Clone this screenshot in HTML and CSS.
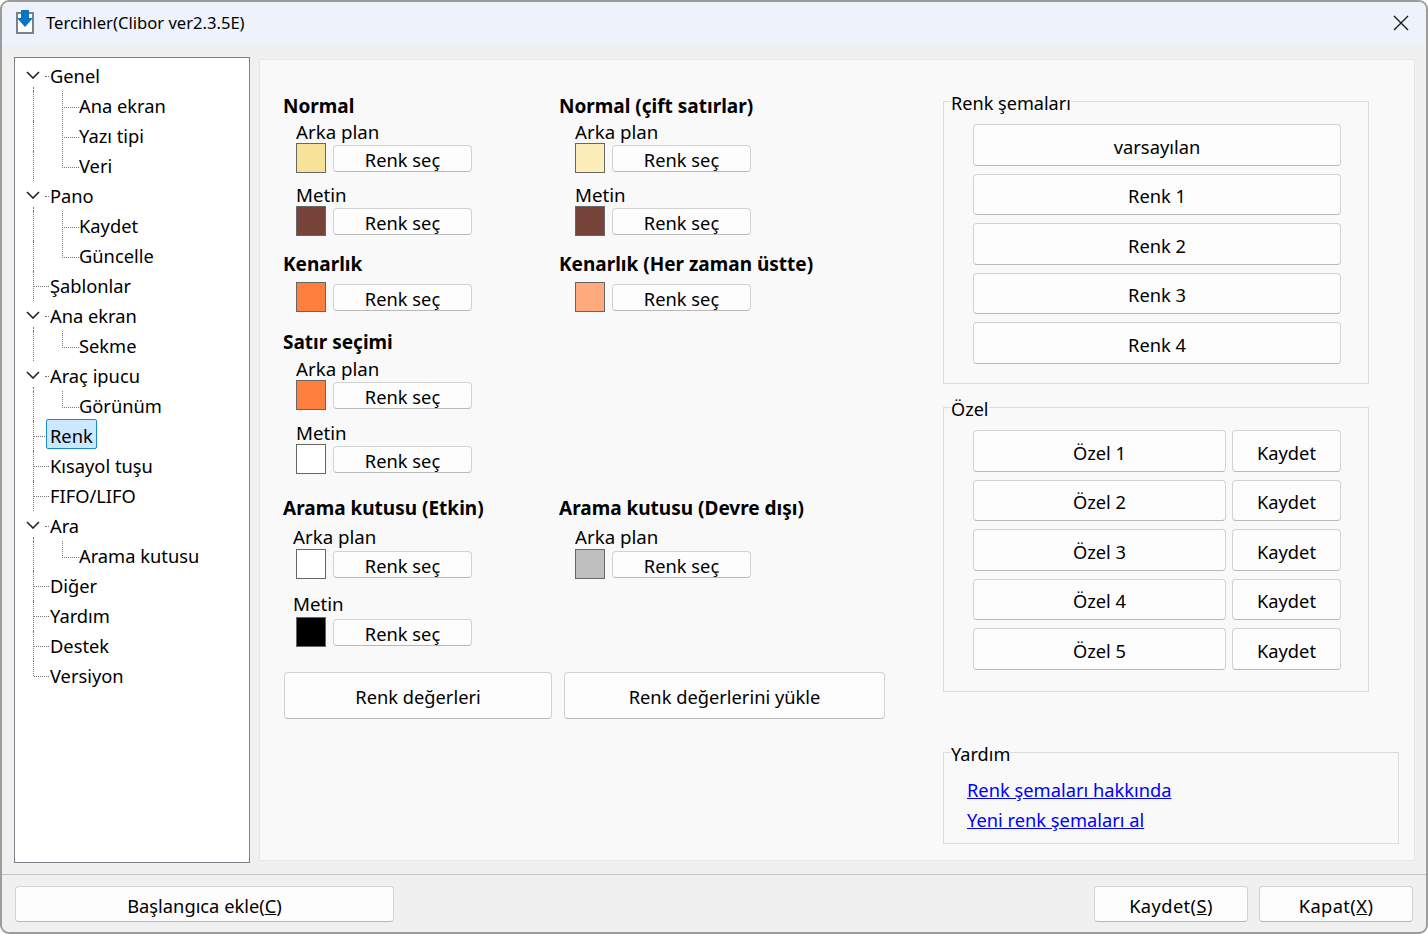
FILE: index.html
```html
<!DOCTYPE html>
<html>
<head>
    <title>Tercihler</title>
    <meta charset="utf-8">
    <link rel="stylesheet" href="styles.css">
</head>
<body>
<div class="window">
    <div class="titlebar">
        <svg class="app-icon" width="18" height="24" viewBox="0 0 18 24">
            <rect x="1" y="3" width="16" height="20" fill="#fff" stroke="#7d8288" stroke-width="2"/>
            <path d="M5 0h8v8h4l-8 9-8-9h4z" fill="#0a74c4"/>
        </svg>
        <span class="title">Tercihler(Clibor ver2.3.5E)</span>
        <svg class="close" width="16" height="16" viewBox="0 0 16 16">
            <path d="M1 1l14 14M15 1L1 15" stroke="#1a1a1a" stroke-width="1.4" fill="none"/>
        </svg>
    </div>

    <div class="main">
        <ul class="tree">
            <li class="node open"><svg class="chevron" width="14" height="8" viewBox="0 0 14 8"><path d="M1 1l6 6 6-6" fill="none" stroke="#222" stroke-width="1.6"/></svg><span>Genel</span></li>
            <li class="leaf">Ana ekran</li>
            <li class="leaf">Yazı tipi</li>
            <li class="leaf last">Veri</li>
            <li class="node open"><svg class="chevron" width="14" height="8" viewBox="0 0 14 8"><path d="M1 1l6 6 6-6" fill="none" stroke="#222" stroke-width="1.6"/></svg><span>Pano</span></li>
            <li class="leaf">Kaydet</li>
            <li class="leaf last">Güncelle</li>
            <li class="node"><span>Şablonlar</span></li>
            <li class="node open"><svg class="chevron" width="14" height="8" viewBox="0 0 14 8"><path d="M1 1l6 6 6-6" fill="none" stroke="#222" stroke-width="1.6"/></svg><span>Ana ekran</span></li>
            <li class="leaf last">Sekme</li>
            <li class="node open"><svg class="chevron" width="14" height="8" viewBox="0 0 14 8"><path d="M1 1l6 6 6-6" fill="none" stroke="#222" stroke-width="1.6"/></svg><span>Araç ipucu</span></li>
            <li class="leaf last">Görünüm</li>
            <li class="node"><span class="selected">Renk</span></li>
            <li class="node"><span>Kısayol tuşu</span></li>
            <li class="node"><span>FIFO/LIFO</span></li>
            <li class="node open"><svg class="chevron" width="14" height="8" viewBox="0 0 14 8"><path d="M1 1l6 6 6-6" fill="none" stroke="#222" stroke-width="1.6"/></svg><span>Ara</span></li>
            <li class="leaf last">Arama kutusu</li>
            <li class="node"><span>Diğer</span></li>
            <li class="node"><span>Yardım</span></li>
            <li class="node"><span>Destek</span></li>
            <li class="node end"><span>Versiyon</span></li>
        </ul>

        <div class="panel">
            <div class="colors">
                <div class="color-row">
                    <div class="group">
                        <h3>Normal</h3>
                        <div class="label">Arka plan</div>
                        <div class="field"><i class="swatch cream"></i><button>Renk seç</button></div>
                        <div class="label next">Metin</div>
                        <div class="field"><i class="swatch brown"></i><button>Renk seç</button></div>
                    </div>
                    <div class="group second">
                        <h3>Normal (çift satırlar)</h3>
                        <div class="label">Arka plan</div>
                        <div class="field"><i class="swatch pale"></i><button>Renk seç</button></div>
                        <div class="label next">Metin</div>
                        <div class="field"><i class="swatch brown"></i><button>Renk seç</button></div>
                    </div>
                </div>
                <div class="color-row border-row">
                    <div class="group">
                        <h3>Kenarlık</h3>
                        <div class="field"><i class="swatch orange"></i><button>Renk seç</button></div>
                    </div>
                    <div class="group second">
                        <h3>Kenarlık (Her zaman üstte)</h3>
                        <div class="field"><i class="swatch peach"></i><button>Renk seç</button></div>
                    </div>
                </div>
                <div class="color-row select-row">
                    <div class="group">
                        <h3>Satır seçimi</h3>
                        <div class="label">Arka plan</div>
                        <div class="field"><i class="swatch orange"></i><button>Renk seç</button></div>
                        <div class="label next">Metin</div>
                        <div class="field"><i class="swatch white"></i><button>Renk seç</button></div>
                    </div>
                </div>
                <div class="color-row search-row">
                    <div class="group narrow">
                        <h3>Arama kutusu (Etkin)</h3>
                        <div class="label">Arka plan</div>
                        <div class="field"><i class="swatch white"></i><button>Renk seç</button></div>
                        <div class="label next">Metin</div>
                        <div class="field"><i class="swatch black"></i><button>Renk seç</button></div>
                    </div>
                    <div class="group second">
                        <h3>Arama kutusu (Devre dışı)</h3>
                        <div class="label">Arka plan</div>
                        <div class="field"><i class="swatch gray"></i><button>Renk seç</button></div>
                    </div>
                </div>
                <div class="value-buttons">
                    <button class="values">Renk değerleri</button>
                    <button class="load">Renk değerlerini yükle</button>
                </div>
            </div>

            <div class="side">
                <fieldset class="box schemes">
                    <legend>Renk şemaları</legend>
                    <button>varsayılan</button>
                    <button>Renk 1</button>
                    <button>Renk 2</button>
                    <button>Renk 3</button>
                    <button>Renk 4</button>
                </fieldset>
                <fieldset class="box custom">
                    <legend>Özel</legend>
                    <div class="pair"><button>Özel 1</button><button>Kaydet</button></div>
                    <div class="pair"><button>Özel 2</button><button>Kaydet</button></div>
                    <div class="pair"><button>Özel 3</button><button>Kaydet</button></div>
                    <div class="pair"><button>Özel 4</button><button>Kaydet</button></div>
                    <div class="pair"><button>Özel 5</button><button>Kaydet</button></div>
                </fieldset>
                <fieldset class="help">
                    <legend>Yardım</legend>
                    <a href="#1">Renk şemaları hakkında</a>
                    <a href="#2">Yeni renk şemaları al</a>
                </fieldset>
            </div>
        </div>
    </div>

    <div class="footer">
        <button class="startup">Başlangıca ekle(<u>C</u>)</button>
        <div class="actions">
            <button>Kaydet(<u>S</u>)</button>
            <button>Kapat(<u>X</u>)</button>
        </div>
    </div>
</div>
</body>
</html>
```

FILE: styles.css
```css
* {
    margin: 0;
    padding: 0;
    box-sizing: border-box;
}

html, body {
    width: 1428px;
    height: 934px;
    overflow: hidden;
    background: #fff;
}

body, button {
    font-family: "Noto Sans", "Open Sans", sans-serif;
    font-size: 18.3px;
    color: #000;
}

ul {
    list-style: none;
}

.window {
    display: flex;
    flex-direction: column;
    width: 1428px;
    height: 934px;
    border: 2px solid #9c9c9c;
    border-radius: 9px;
    overflow: hidden;
    background: #f0f0f0;
}

.titlebar {
    display: flex;
    align-items: center;
    height: 43px;
    flex-shrink: 0;
    padding: 0 17px 0 14px;
    background: #eef3fb;
}

.app-icon {
    margin-right: 12px;
    margin-bottom: 3px;
}

.title {
    font-size: 16.6px;
    margin-bottom: 3px;
}

.close {
    margin-left: auto;
    margin-bottom: 2px;
}

.main {
    display: flex;
    height: 830px;
    flex-shrink: 0;
    padding: 12px 11px 0 12px;
    gap: 9px;
    border-bottom: 1px solid #c4c4c4;
}

/* tree */
.tree {
    width: 236px;
    height: 806px;
    padding-top: 3px;
    border: 1px solid #7d838b;
    background: #fff;
}

.tree li {
    display: flow-root;
    position: relative;
    height: 30px;
    line-height: 30px;
    white-space: nowrap;
}

.node {
    padding-left: 35px;
}

.leaf {
    padding-left: 64px;
}

.node::before, .leaf::before {
    content: "";
    position: absolute;
    left: 18px;
    top: 0;
    bottom: 0;
    border-left: 1px dotted #777;
}

.node.open::before {
    top: 26px;
}

.node.end::before {
    bottom: 15px;
}

.node::after {
    content: "";
    position: absolute;
    left: 19px;
    width: 15px;
    top: 15px;
    border-top: 1px dotted #777;
}

.node.open::after {
    left: 30px;
    width: 4px;
}

.leaf::after {
    content: "";
    position: absolute;
    left: 47px;
    top: 0;
    height: 16px;
    width: 16px;
    border-left: 1px dotted #777;
    border-bottom: 1px dotted #777;
}

.leaf:not(.last) {
    background: linear-gradient(#777 50%, transparent 50%) 47px 0 / 1px 2px repeat-y;
}

.chevron {
    position: absolute;
    left: 11px;
    top: 10px;
}

.tree span {
    display: block;
    width: fit-content;
    padding: 0 3px;
    margin-left: -3px;
    height: 30px;
    position: relative;
    z-index: 1;
}

.tree .selected {
    height: 30px;
    margin-top: -2px;
    margin-left: -4px;
    line-height: 32px;
    background: #cce8ff;
    border: 1px solid #1a8ad8;
    border-radius: 2px;
    padding: 0 3px;
}

/* panel */
.panel {
    display: flex;
    width: 1156px;
    height: 802px;
    margin-top: 2px;
    border: 1px solid #e6e6e6;
    background: #f9f9f9;
}

.colors {
    width: 683px;
    padding: 33px 0 0 23px;
}

.color-row {
    display: flex;
}

.border-row {
    margin-top: 15px;
}

.select-row {
    margin-top: 17px;
}

.search-row {
    margin-top: 21px;
}

.group {
    width: 276px;
}

.group h3 {
    height: 28px;
    line-height: 27px;
    font-size: 19px;
    font-weight: 700;
    white-space: nowrap;
}

.label {
    height: 22px;
    line-height: 22px;
    font-size: 18.7px;
    padding-left: 13px;
}

.group.second .label {
    padding-left: 16px;
}

.group.narrow .label {
    padding-left: 10px;
}

.label.next {
    margin-top: 11px;
}

.border-row h3 {
    margin-bottom: 3px;
}

.select-row h3 {
    margin-bottom: 1px;
}

.select-row .label.next {
    margin-top: 12px;
}

.search-row h3 {
    margin-bottom: 4px;
}

.search-row .label {
    line-height: 20px;
}

.search-row .label.next {
    height: 24px;
    margin-top: 14px;
    line-height: 22px;
}

.field {
    display: flex;
    align-items: center;
    height: 30px;
    gap: 7px;
    padding-left: 13px;
}

.group.second .field {
    padding-left: 16px;
}

.swatch {
    display: block;
    width: 30px;
    height: 30px;
    border: 1px solid #666;
}

.cream { background: #f7e29a; }
.pale { background: #fbeeb8; }
.brown { background: #764239; }
.orange { background: #ff7f3f; }
.peach { background: #ffa97f; }
.white { background: #fff; }
.black { background: #000; }
.gray { background: #bfbfbf; }

button {
    display: block;
    padding-top: 3px;
    border: 1px solid #d2d2d2;
    border-bottom-color: #b8b8b8;
    border-radius: 4px;
    background: #fdfdfd;
    text-align: center;
}

.field button {
    width: 139px;
    height: 27px;
    padding-top: 1px;
    line-height: 25px;
}

.value-buttons {
    display: flex;
    gap: 12px;
    margin-top: 25px;
    padding-left: 1px;
}

.value-buttons button {
    height: 47px;
    padding-top: 2px;
}

.values {
    width: 268px;
}

.load {
    width: 321px;
}

/* right column */
.side {
    width: 456px;
    padding-top: 29px;
}

fieldset {
    border: 1px solid #dcdcdc;
}

legend {
    height: 24px;
    padding-top: 4px;
    line-height: 20px;
    font-size: 18.1px;
    margin-left: -22px;
}

.box {
    display: flex;
    flex-direction: column;
    gap: 8px;
    width: 426px;
    padding: 11px 27px 19px 29px;
}

.box button {
    height: 41.5px;
}

.custom {
    margin-top: 11.5px;
    padding-bottom: 21.5px;
}

.pair {
    display: flex;
    gap: 6px;
}

.pair button:first-child {
    width: 253px;
}

.pair button:last-child {
    width: 109px;
}

.help {
    width: 456px;
    margin-top: 48px;
    padding: 11px 0 8px 23px;
}

.help legend {
    margin-left: -16px;
}

.help a {
    display: block;
    height: 30px;
    line-height: 30px;
    color: #0000ff;
}

/* footer */
.footer {
    display: flex;
    justify-content: space-between;
    padding: 11px 13px 0 13px;
}

.footer button {
    height: 36px;
    padding-top: 3px;
}

.startup {
    width: 379px;
}

.actions {
    display: flex;
    gap: 11px;
}

.actions button {
    width: 154px;
    letter-spacing: 0.4px;
}
```
